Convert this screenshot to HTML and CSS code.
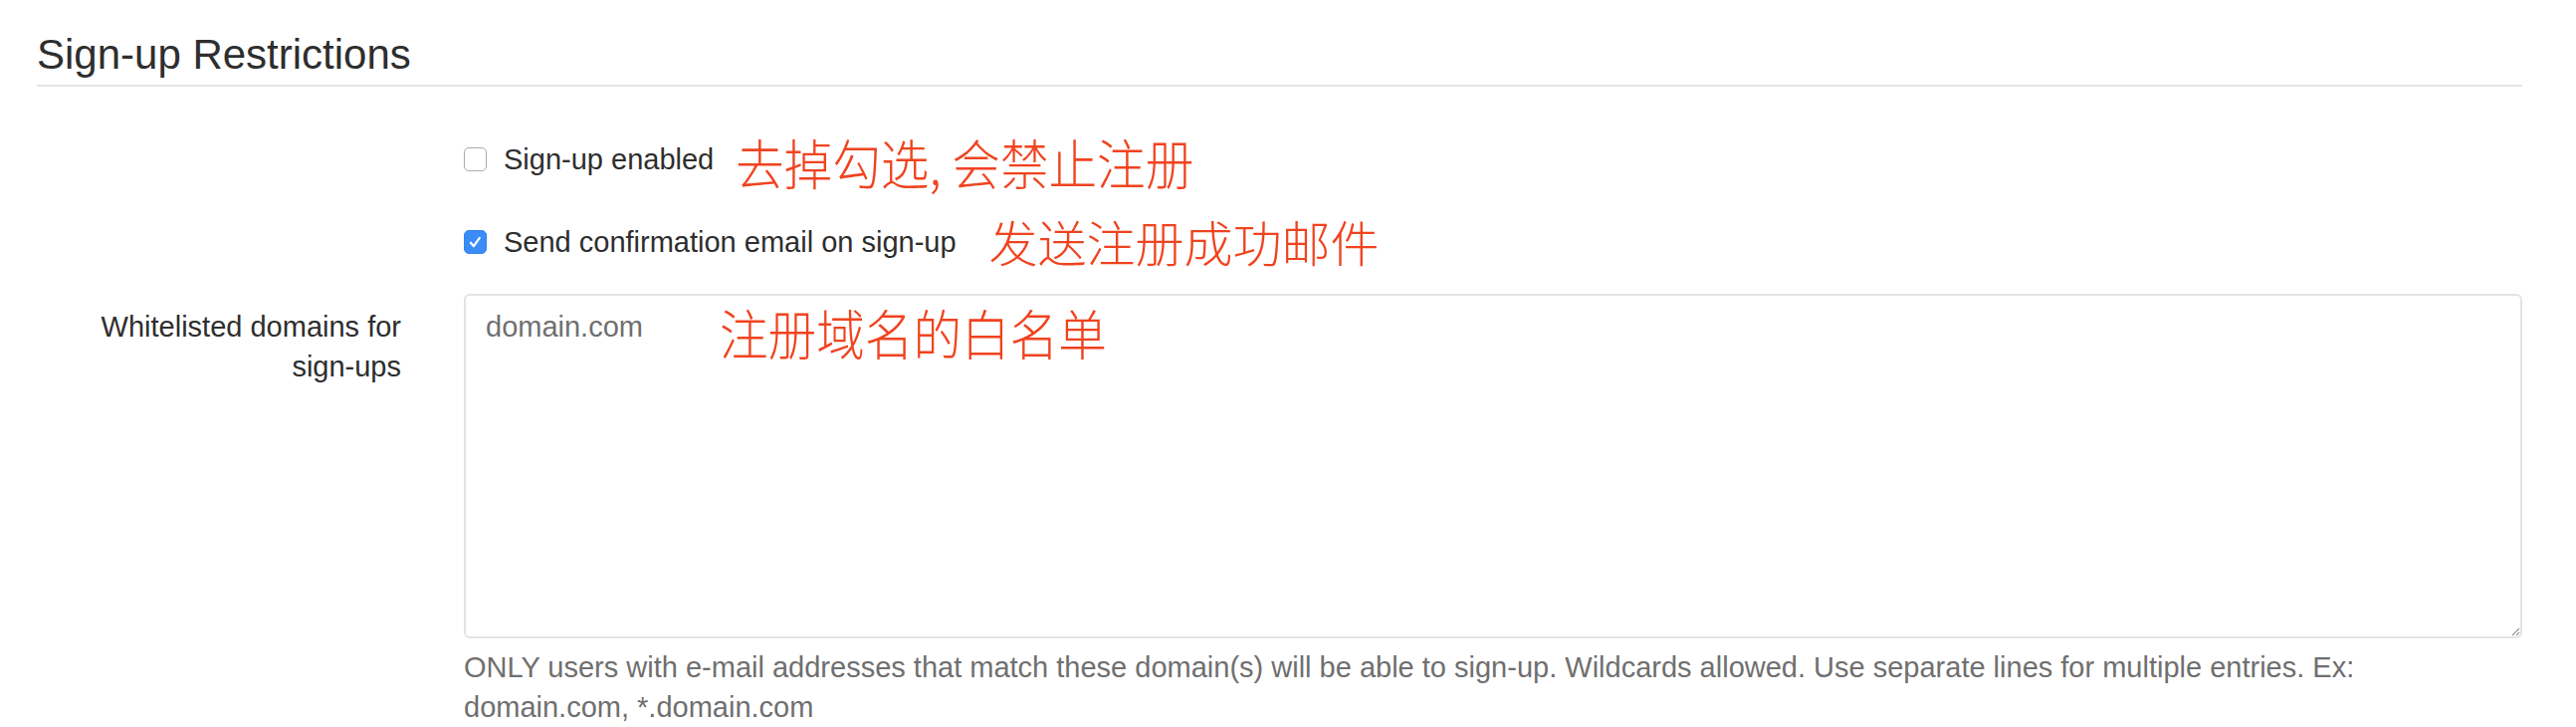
FILE: index.html
```html
<!DOCTYPE html>
<html lang="en">
<head>
<meta charset="utf-8">
<title>Sign-up Restrictions</title>
<link rel="stylesheet" href="styles.css">
</head>
<body>
<div class="page">
  <h3 class="section-title">Sign-up Restrictions</h3>
  <form class="settings-form">
    <div class="form-row row-first">
      <div class="form-label"></div>
      <div class="control">
        <label class="check-row">
          <span class="box"></span>
          <span class="check-text">Sign-up enabled</span>
          <span class="note note-a">去掉勾选, 会禁止注册</span>
        </label>
      </div>
    </div>
    <div class="form-row row-second">
      <div class="form-label"></div>
      <div class="control">
        <label class="check-row">
          <span class="box box-checked"><svg viewBox="0 0 23 23" width="23" height="23"><path d="M6.5 11.8 L9.8 15.6 L16.2 6.4" fill="none" stroke="#ffffff" stroke-width="2.4" stroke-linecap="round" stroke-linejoin="round"/></svg></span>
          <span class="check-text">Send confirmation email on sign-up</span>
          <span class="note note-b">发送注册成功邮件</span>
        </label>
      </div>
    </div>
    <div class="form-row row-third">
      <label class="form-label label-text" for="domains">Whitelisted domains for sign-ups</label>
      <div class="control">
        <div class="textarea-wrap">
          <textarea id="domains" class="domains" placeholder="domain.com"></textarea>
          <span class="note note-c">注册域名的白名单</span>
        </div>
        <p class="help">ONLY users with e-mail addresses that match these domain(s) will be able to sign-up. Wildcards allowed. Use separate lines for multiple entries. Ex: domain.com, *.domain.com</p>
      </div>
    </div>
  </form>
</div>
</body>
</html>
```

FILE: styles.css
```css
html, body {
  margin: 0;
  padding: 0;
  background: #ffffff;
}

body {
  font-family: "Liberation Sans", Arial, "Noto Sans CJK SC", sans-serif;
  color: #2e2e2e;
  overflow: hidden;
}

.page {
  padding: 32px 54px 0 37px;
}

.section-title {
  margin: 0;
  font-size: 42px;
  line-height: 46px;
  font-weight: 400;
  color: #2e2e2e;
  padding-bottom: 7px;
  border-bottom: 2px solid #e5e5e5;
}

.settings-form {
  margin: 53px 0 0 0;
}

.form-row {
  display: grid;
  grid-template-columns: 366px 1fr;
  column-gap: 63px;
}

.row-second {
  margin-top: 43px;
}

.row-third {
  margin-top: 32px;
}

.check-row {
  display: flex;
  align-items: center;
  height: 40px;
  font-size: 29px;
  line-height: 40px;
  white-space: nowrap;
}

.box {
  box-sizing: border-box;
  width: 23px;
  height: 24px;
  border: 1.5px solid #ababab;
  border-radius: 5px;
  background: #ffffff;
  margin-right: 17px;
  flex: none;
  display: flex;
  align-items: center;
  justify-content: center;
}

.box-checked {
  background: #3b8cf6;
  border-color: #3585ee;
}

.box-checked svg {
  display: block;
}

.check-text {
  color: #2e2e2e;
}

.note {
  font-family: "Noto Sans CJK SC", "Noto Sans CJK JP", sans-serif;
  font-weight: 300;
  color: #f0431f;
  line-height: 40px;
  display: inline-block;
  white-space: nowrap;
}

.note-a {
  font-size: 54px;
  transform: scaleX(0.9);
  transform-origin: left center;
  margin-left: 22px;
  margin-top: 6px;
}

.note-b {
  font-size: 49px;
  margin-left: 33px;
  margin-top: -2px;
}

.label-text {
  text-align: right;
  font-size: 29px;
  line-height: 40px;
  padding-top: 13px;
  color: #2e2e2e;
}

.textarea-wrap {
  position: relative;
}

.domains {
  display: block;
  box-sizing: border-box;
  width: 100%;
  height: 346px;
  margin: 0;
  padding: 11px 20px;
  border: 2px solid #e3e3e3;
  border-radius: 6px;
  font-family: "Liberation Sans", Arial, sans-serif;
  font-size: 29px;
  line-height: 40px;
  color: #2e2e2e;
  background: #ffffff;
  resize: vertical;
  outline: none;
}

.domains::placeholder {
  color: #6f6f6f;
  opacity: 1;
}

.note-c {
  position: absolute;
  left: 257px;
  top: 19px;
  font-size: 54px;
  transform: scaleX(0.9);
  transform-origin: left center;
}

.help {
  margin: 9px 0 0 0;
  font-size: 29px;
  line-height: 40px;
  color: #6f6f6f;
}
```
